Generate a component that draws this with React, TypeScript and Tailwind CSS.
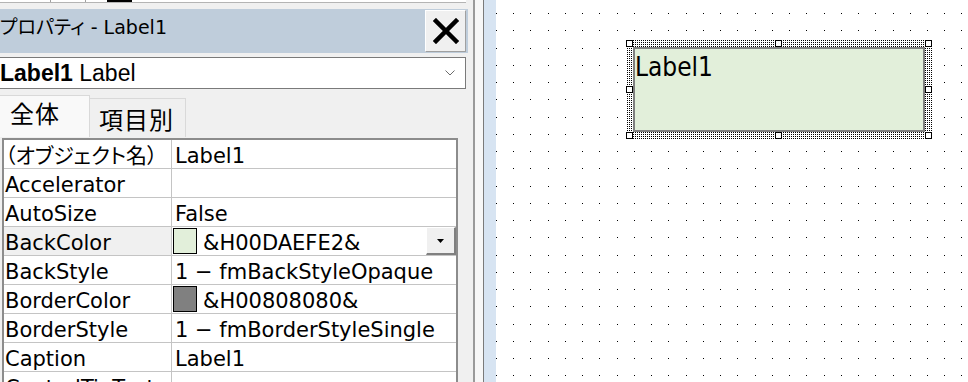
import React from "react";

type Row = {
  name: string;
  value: string;
  swatch?: string;
  selected?: boolean;
};

const rows: Row[] = [
  { name: "（オブジェクト名）", value: "Label1" },
  { name: "Accelerator", value: "" },
  { name: "AutoSize", value: "False" },
  { name: "BackColor", value: "&H00DAEFE2&", swatch: "bg-[#e2efda]", selected: true },
  { name: "BackStyle", value: "1 − fmBackStyleOpaque" },
  { name: "BorderColor", value: "&H00808080&", swatch: "bg-[#808080]" },
  { name: "BorderStyle", value: "1 − fmBorderStyleSingle" },
  { name: "Caption", value: "Label1" },
  { name: "ControlTipText", value: "" },
];

const gridFont = "font-['DejaVu_Sans','Noto_Sans_CJK_JP',sans-serif] [font-feature-settings:'palt']";

const DotGrid = () => {
  const xs = Array.from({ length: 28 }, (_, i) => Math.round(i * 17.24));
  const ys = Array.from({ length: 22 }, (_, j) => 13 + Math.round(j * 17.26));
  return (
    <svg className="absolute inset-0" width="472" height="382" shapeRendering="crispEdges">
      {ys.map((y) =>
        xs.map((x) => <rect key={`${x}-${y}`} x={x} y={y} width="1" height="1" fill="#000" />)
      )}
    </svg>
  );
};

const Handle = ({ className }: { className: string }) => (
  <div className={`absolute w-[7px] h-[7px] bg-white border border-black ${className}`} />
);

const PropertyRow = ({ row }: { row: Row }) => (
  <div className="flex h-[29px] border-b border-[#c4c4c4] text-[21px] leading-none text-black">
    <div
      className={`w-[168px] shrink-0 border-r border-[#c4c4c4] pl-[1px] pt-[6px] whitespace-nowrap overflow-hidden ${
        row.selected ? "bg-[#f0f0f0]" : "bg-white"
      }`}
    >
      {row.name}
    </div>
    <div className="flex-1 flex bg-white whitespace-nowrap overflow-hidden">
      {row.swatch && (
        <div className={`ml-[1px] mt-[1px] w-[24px] h-[26px] shrink-0 border border-black ${row.swatch}`} />
      )}
      <div className={`pt-[6px] ${row.swatch ? "pl-[6px]" : "pl-[3px]"}`}>{row.value}</div>
      {row.selected && (
        <div className="ml-auto w-[30px] h-full flex items-center justify-center bg-[#f0f0f0] border-t border-l border-white border-r-2 border-b-2 border-r-[#808080] border-b-[#808080]">
          <svg width="7" height="4" viewBox="0 0 7 4">
            <path d="M0 0h7L3.5 4z" fill="#000" />
          </svg>
        </div>
      )}
    </div>
  </div>
);

export default function App() {
  return (
    <div className="w-[968px] h-[382px] flex overflow-hidden bg-white">
      {/* properties window */}
      <div className="w-[473px] shrink-0 h-full bg-[#f0f0f0] flex flex-col overflow-hidden">
        <div className="h-[9px] shrink-0">
          <div className="h-[3px] w-[466px] bg-white border-b border-[#b4b4b4] flex">
            <div className="w-[50px]" />
            <div className="w-px bg-[#a0a0a0]" />
            <div className="w-[34px]" />
            <div className="w-px bg-[#a0a0a0]" />
            <div className="w-[21px]" />
            <div className="w-[25px] h-[2px] bg-black" />
          </div>
        </div>

        <div className="h-[44px] w-[468px] shrink-0 bg-[#bfcddb] flex items-start justify-between">
          <div className="pt-[9px] text-[19px] leading-none text-black whitespace-nowrap font-['DejaVu_Sans','Noto_Sans_CJK_JP',sans-serif] [font-feature-settings:'palt']">
            プロパティ - Label1
          </div>
          <div className="mt-[1px] mr-[2px] w-[41px] h-[42px] bg-[#f0f0f0] border-t border-l border-white border-r border-b border-r-[#a0a0a0] border-b-[#a0a0a0] flex items-center justify-center">
            <svg width="26" height="26" viewBox="0 0 26 26">
              <path d="M3 3L23 23M23 3L3 23" stroke="#000" strokeWidth="4.5" strokeLinecap="square" />
            </svg>
          </div>
        </div>

        <div className="mt-[4px] -ml-[4px] h-[32px] w-[470px] shrink-0 bg-white border border-[#7a7a7a] flex items-center justify-between pl-[3px] pr-[10px] font-['Liberation_Sans',sans-serif] text-[23px] leading-none text-black whitespace-nowrap">
          <div>
            <span className="font-bold">Label1</span> Label
          </div>
          <svg width="10" height="6" viewBox="0 0 10 6">
            <path d="M0.5 0.5L5 5L9.5 0.5" stroke="#6b6b6b" strokeWidth="1" fill="none" />
          </svg>
        </div>

        <div className="mt-[6px] h-[42px] shrink-0 flex items-end font-['Noto_Sans_CJK_JP',sans-serif] text-[24px] leading-none tracking-[1px] text-black">
          <div className="-ml-[2px] w-[92px] h-[42px] bg-[#f9f9f9] border border-b-0 border-[#d9d9d9] pl-[11px] pt-[5px]">
            全体
          </div>
          <div className="w-[96px] h-[39px] bg-[#f0f0f0] border border-l-0 border-b-0 border-[#d9d9d9] pl-[9px] pt-[8px]">
            項目別
          </div>
        </div>

        <div className={`mt-[1px] ml-[2px] w-[456px] border-2 border-b-0 border-[#8c8c8c] ${gridFont}`}>
          {rows.map((row) => (
            <PropertyRow key={row.name} row={row} />
          ))}
        </div>
      </div>

      {/* window edges */}
      <div className="w-[2px] shrink-0 bg-[#9a9a9a]" />
      <div className="w-[8px] shrink-0 bg-[#f7f7f7]" />
      <div className="w-px shrink-0 bg-[#7a7a7a]" />
      <div className="w-[12px] shrink-0 bg-[#d7e4f2]" />

      {/* form designer canvas */}
      <div className="relative flex-1 h-full bg-white">
        <DotGrid />
        <div className="absolute left-[130px] top-[40px] w-[306px] h-[99px] p-[7px] bg-[repeating-conic-gradient(#000_0_25%,#fff_0_100%)] bg-[length:2px_2px]">
          <div className="w-full h-full bg-[#e2efda] border-2 border-[#808080] pt-[5px] font-['DejaVu_Sans_Condensed','Liberation_Sans',sans-serif] text-[26px] leading-none text-black">
            Label1
          </div>
          <Handle className="left-0 top-0" />
          <Handle className="left-[149px] top-0" />
          <Handle className="left-[299px] top-0" />
          <Handle className="left-0 top-[46px]" />
          <Handle className="left-[299px] top-[46px]" />
          <Handle className="left-0 top-[92px]" />
          <Handle className="left-[149px] top-[92px]" />
          <Handle className="left-[299px] top-[92px]" />
        </div>
      </div>
    </div>
  );
}
